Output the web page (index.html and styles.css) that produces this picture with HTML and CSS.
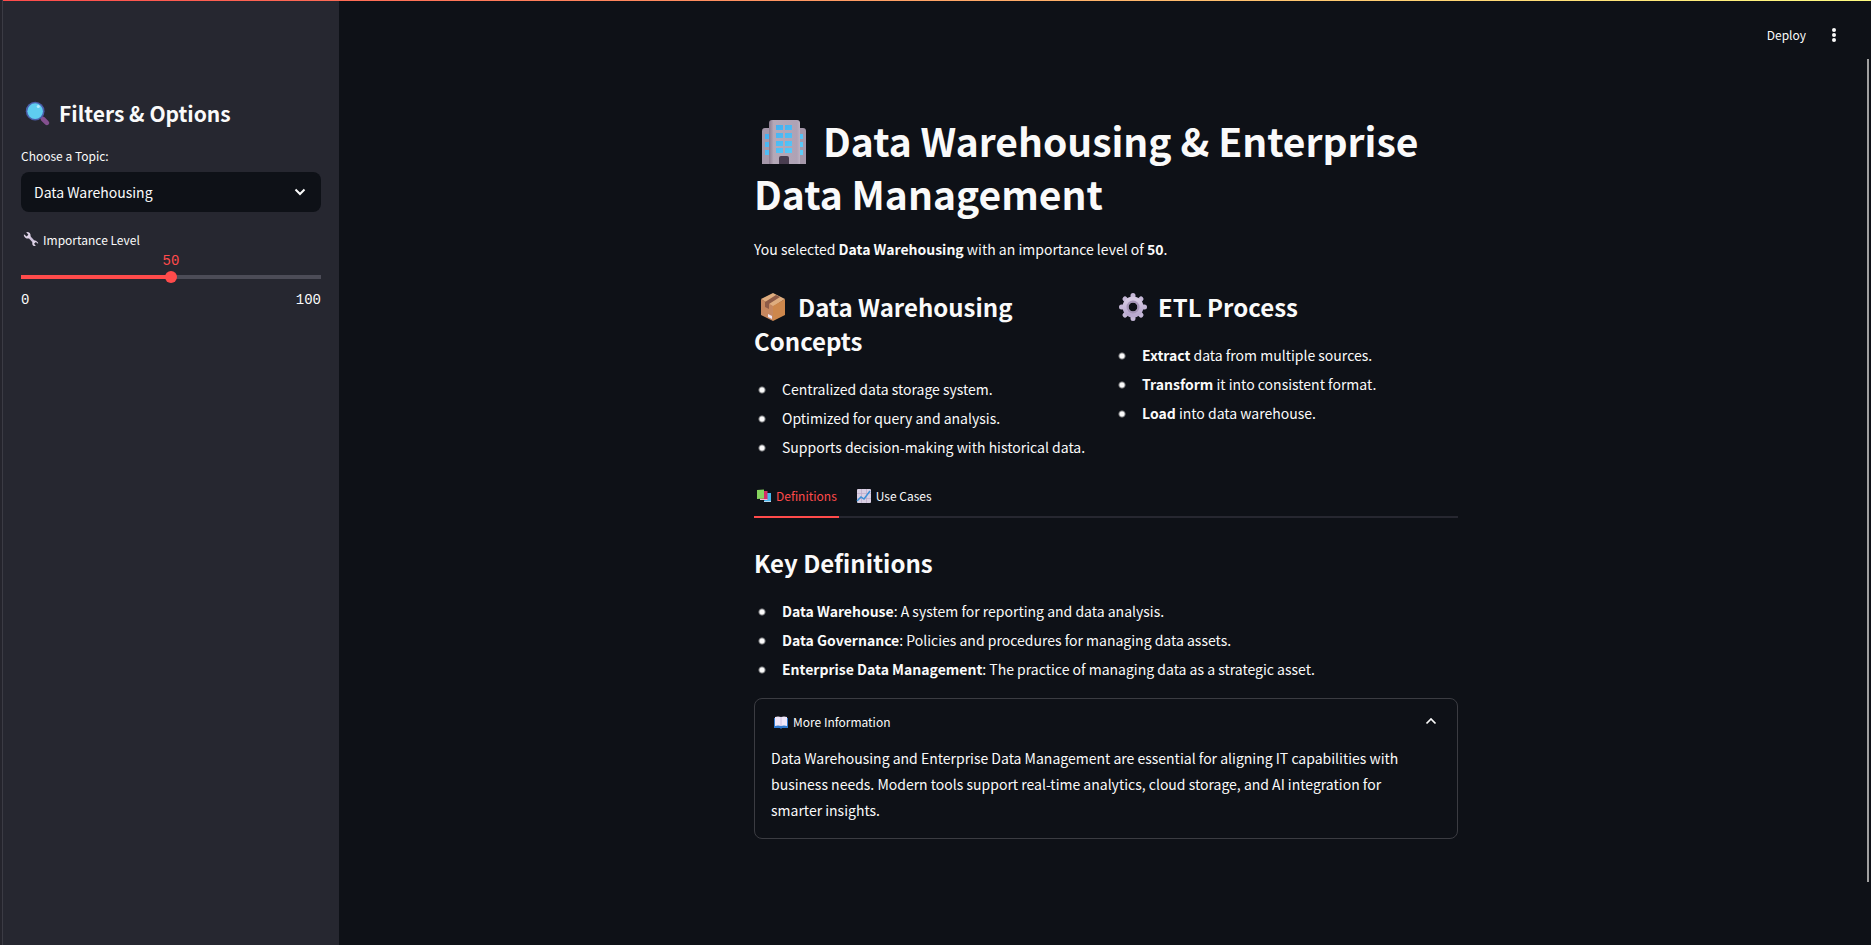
FILE: index.html
```html
<!DOCTYPE html>
<html lang="en">
<head>
<meta charset="utf-8">
<title>Data Warehousing &amp; Enterprise Data Management</title>
<link rel="stylesheet" href="styles.css">
</head>
<body>
<div class="app">
  <div class="decoration"></div>
  <aside class="sidebar">
    <h2 class="side-title"><svg class="emoji emoji-side" viewBox="0 0 32 32" aria-hidden="true"><path d="M20 20l8 8" stroke="#533566" stroke-width="4"/><path d="M23 23l5 5" stroke="#84508f" stroke-width="6" stroke-linecap="round"/><circle cx="13" cy="13" r="12" fill="#4b5eaa"/><circle cx="13" cy="13" r="10" fill="#5fcdf0"/><circle cx="17" cy="7" r="2" fill="#b5ebfb"/></svg>Filters &amp; Options</h2>
    <label class="label" for="topic">Choose a Topic:</label>
    <div class="select-wrap">
      <select class="select" id="topic"><option>Data Warehousing</option></select>
      <svg class="select-chevron" viewBox="0 0 12 8" aria-hidden="true"><path d="M1.500 1.500l4.500 4.500 4.500-4.500" fill="none" stroke="#fafafa" stroke-width="2"/></svg>
    </div>
    <label class="label" for="level"><svg class="emoji emoji-wrench" viewBox="0 0 32 32" aria-hidden="true"><path d="M10 9l13 14" stroke="#cfc3dc" stroke-width="6"/><path d="M0 5l6 5 4-4-5-6c6-1 11 3 10 9-1 6-9 8-13 3-2-2-3-5-2-7zM32 27l-5-4-4 4 4 5c-5 1-9-2-8-7 1-6 7-7 11-3 2 2 3 3 2 5z" fill="#dfd4e8"/></svg>Importance Level</label>
    <output class="value" for="level">50</output>
    <input class="slider" id="level" type="range" min="0" max="100" value="50">
    <div class="ticks"><span>0</span><span>100</span></div>
  </aside>
  <main class="main">
    <header class="toolbar">
      <button class="deploy" type="button">Deploy</button>
      <button class="menu" type="button" aria-label="Main menu"><svg viewBox="0 0 4 14" aria-hidden="true"><circle cx="2" cy="2" r="2"/><circle cx="2" cy="7" r="2"/><circle cx="2" cy="12" r="2"/></svg></button>
    </header>
    <div class="content">
      <h1 class="title"><svg class="emoji emoji-title" viewBox="0 0 44 44" aria-hidden="true"><defs><linearGradient id="wall"><stop offset="0" stop-color="#8b7b8f"/><stop offset=".15" stop-color="#b5a9b8"/><stop offset=".9" stop-color="#aea2b5"/><stop offset="1" stop-color="#bdb2c2"/></linearGradient><linearGradient id="glass" x1="0" y1="0" x2="1" y2="1"><stop offset="0" stop-color="#3eaaf0"/><stop offset="1" stop-color="#5fd0fa"/></linearGradient></defs><path d="M0 44V11q0-3 3-3h38q3 0 3 3v33z" fill="#a598aa"/><path d="M7 44V3q0-3 3-3h25q3 0 3 3v41z" fill="url(#wall)"/><path fill="url(#glass)" d="M14 5h7v5h-7zM23 5h7v5h-7zM14 13h7v5h-7zM23 13h7v5h-7zM14 21h7v5h-7zM23 21h7v5h-7zM14 28h7v5h-7zM23 28h7v5h-7zM3 14h4v5H3zM3 22h4v5H3zM3 30h4v5H3zM38 14h3v5h-3zM38 22h3v5h-3zM38 30h3v5h-3z"/><path d="M17 44v-6q0-2 2-2h6q2 0 2 2v6z" fill="#493d50"/></svg>Data Warehousing &amp; Enterprise Data Management</h1>
      <p class="text">You selected <strong>Data Warehousing</strong> with an importance level of <strong>50</strong>.</p>
      <div class="columns">
        <section class="column">
          <h3 class="heading"><svg class="emoji emoji-heading" viewBox="0 0 28 28" aria-hidden="true"><path d="M14 0l12 6-12 8L2 6z" fill="#dfad7f"/><path d="M2 6l12 7v15L2 22z" fill="#c6875f"/><path d="M26 6l-12 7v15l12-6z" fill="#cd874c"/><path d="M17 2l4 2-11 7v5l-4-2V9z" fill="#8e5b47"/><path d="M9 21l4 2v3l-4-2z" fill="#eee5f4"/></svg>Data Warehousing Concepts</h3>
          <ul class="list">
            <li>Centralized data storage system.</li>
            <li>Optimized for query and analysis.</li>
            <li>Supports decision-making with historical data.</li>
          </ul>
        </section>
        <section class="column">
          <h3 class="heading"><svg class="emoji emoji-heading" viewBox="0 0 28 28" aria-hidden="true"><defs><linearGradient id="metal" x1="0" y1="0" x2="0" y2="1"><stop offset="0" stop-color="#d6cae3"/><stop offset="1" stop-color="#b9a9cf"/></linearGradient></defs><g stroke="#c5b8d7" stroke-width="5" stroke-linecap="round"><path d="M14 2.500v4M14 21.500v4M2.500 14h4M21.500 14h4M6 6l3 3M19 19l3 3M6 22l3-3M19 9l3-3"/></g><circle cx="14" cy="14" r="7.500" fill="none" stroke="url(#metal)" stroke-width="6"/><circle cx="14" cy="14" r="5.500" fill="none" stroke="#a696b8" stroke-width="2"/></svg>ETL Process</h3>
          <ul class="list">
            <li><strong>Extract</strong> data from multiple sources.</li>
            <li><strong>Transform</strong> it into consistent format.</li>
            <li><strong>Load</strong> into data warehouse.</li>
          </ul>
        </section>
      </div>
      <div class="tabs" role="tablist">
        <button class="tab tab-active" type="button" role="tab" aria-selected="true"><svg class="emoji emoji-small" viewBox="0 0 14 14" aria-hidden="true"><path d="M8 4h6v9H7z" fill="#48b9ee"/><path d="M7 12h7v1H7z" fill="#b8d8f0"/><path d="M3 2h7.500v9H3z" fill="#d52c68"/><path d="M3 10h7.500v1H3z" fill="#eeb5d4"/><path d="M0 1l7-.5v9L0 10z" fill="#86d35e"/></svg>Definitions</button>
        <button class="tab" type="button" role="tab" aria-selected="false"><svg class="emoji emoji-small" viewBox="0 0 14 14" aria-hidden="true"><rect width="14" height="14" rx="1" fill="#d9cfe3"/><path d="M0 4.500h14M0 9.500h14M4.500 0v14M9.500 0v14" stroke="#baaac8" stroke-width=".7"/><path d="M0 12l4-4 3 2 6-8" fill="none" stroke="#3c91d7" stroke-width="1.500"/></svg>Use Cases</button>
      </div>
      <h3 class="heading">Key Definitions</h3>
      <ul class="list">
        <li><strong>Data Warehouse</strong>: A system for reporting and data analysis.</li>
        <li><strong>Data Governance</strong>: Policies and procedures for managing data assets.</li>
        <li><strong>Enterprise Data Management</strong>: The practice of managing data as a strategic asset.</li>
      </ul>
      <details class="expander" open>
        <summary class="summary"><span><svg class="emoji emoji-small" viewBox="0 0 14 14" aria-hidden="true"><path d="M0 3h14v10H8l-1 1-1-1H0z" fill="#2f79cf"/><path d="M1 2q3-1 6 0 3-1 6 0v9q-3-1-6 0-3-1-6 0z" fill="#efe7fa"/><path d="M7 2v9" stroke="#c4b7da" stroke-width=".8"/></svg>More Information</span><svg class="chevron" viewBox="0 0 12 8" aria-hidden="true"><path d="M1.500 5.500L6 1l4.500 4.500" fill="none" stroke="#fafafa" stroke-width="1.700"/></svg></summary>
        <p class="text expander-text">Data Warehousing and Enterprise Data Management are essential for aligning IT capabilities with business needs. Modern tools support real-time analytics, cloud storage, and AI integration for smarter insights.</p>
      </details>
    </div>
    <div class="scroll-thumb"></div>
  </main>
</div>
</body>
</html>
```

FILE: styles.css
```css
* { box-sizing: border-box; }

body {
  margin: 0;
  background: #0e1117;
  color: #fafafa;
  font: 14px/26px "Noto Sans CJK SC", "Noto Sans", sans-serif;
}

h1, h2, h3, p, ul { margin: 0; padding: 0; }
button, select { font: inherit; color: inherit; }
button { padding: 0; border: 0; background: none; }

.app {
  position: relative;
  display: flex;
  min-height: 100vh;
  border-left: 2px solid #24242c;
}

.decoration {
  position: absolute;
  top: 0;
  left: 1px;
  right: 0;
  height: 1px;
  background: linear-gradient(90deg, #ff4b4b, #fffd80);
}

.sidebar {
  flex: 0 0 337px;
  padding: 99px 18px 0;
  border-left: 1px solid #3b3b44;
  background: #262730;
}

.emoji { display: inline-block; overflow: visible; }

.side-title {
  margin-bottom: 18px;
  font-size: 21px;
  line-height: 29px;
  font-weight: 600;
}

.emoji-side { width: 25px; height: 25px; margin: 0 9px 0 4px; vertical-align: -4px; }

.label {
  display: block;
  font-size: 12px;
  line-height: 20px;
}

.emoji-wrench { width: 14px; height: 14px; margin: 0 5px 0 3px; vertical-align: -1px; }

.select-wrap { position: relative; margin: 6px 0 18px; }

.select {
  display: block;
  width: 100%;
  height: 40px;
  padding: 0 13px;
  border: 0;
  border-radius: 8px;
  appearance: none;
  background: #0e1117;
}

.select-chevron {
  position: absolute;
  top: 16px;
  right: 15px;
  width: 12px;
  height: 8px;
  pointer-events: none;
}

.value {
  display: block;
  padding-top: 1px;
  color: #ff4b4b;
  font: 14px/20px "Liberation Mono", monospace;
  text-align: center;
}

.slider {
  display: block;
  width: 100%;
  height: 12px;
  margin: 0 0 7px;
  border-radius: 2px;
  appearance: none;
  background: linear-gradient(90deg, #ff4b4b 50%, #4c4c57 50%) center / 100% 4px no-repeat;
}

.slider::-webkit-slider-thumb {
  width: 12px;
  height: 12px;
  border-radius: 50%;
  appearance: none;
  background: #ff4b4b;
}

.ticks {
  display: flex;
  justify-content: space-between;
  font: 14px/20px "Liberation Mono", monospace;
}

.main { position: relative; flex: 1; min-width: 0; padding-left: 2px; }

.toolbar {
  display: flex;
  justify-content: flex-end;
  align-items: center;
  gap: 26px;
  height: 70px;
  padding-right: 35px;
}

.deploy { font-size: 12px; line-height: 20px; }
.menu { display: flex; }
.menu svg { width: 4px; height: 14px; fill: #fafafa; }

.content {
  max-width: 736px;
  margin: 0 auto;
  padding: 44px 16px 16px;
}

.title {
  margin-bottom: 16px;
  font-size: 39px;
  line-height: 53px;
  font-weight: 700;
}

.emoji-title { width: 44px; height: 44px; margin: 0 17px 0 8px; vertical-align: -7px; }

strong { font-weight: 600; }

.columns {
  display: grid;
  grid-template-columns: 1fr 1fr;
  gap: 16px;
  margin: 28px 0 16px;
}

.heading {
  margin-bottom: 18px;
  font-size: 24px;
  line-height: 34px;
  font-weight: 600;
}

.emoji-heading { width: 28px; height: 28px; margin: 0 11px 0 5px; vertical-align: -4px; }

.list {
  display: grid;
  gap: 3px;
  list-style: none;
}

.list li {
  padding-left: 28px;
  background: radial-gradient(circle at 8px 14px, #fafafa 2px, transparent 4px);
}

.tabs {
  display: flex;
  gap: 16px;
  margin-bottom: 28px;
  border-bottom: 2px solid #262730;
}

.tab {
  height: 42px;
  margin-bottom: -2px;
  padding: 0 2px;
  border-bottom: 2px solid transparent;
  font-size: 12px;
  line-height: 20px;
}

.tab-active { padding-left: 3px; color: #ff4b4b; border-color: #ff4b4b; }

.emoji-small { width: 14px; height: 14px; margin-right: 5px; vertical-align: -2px; }

.expander {
  margin-top: 16px;
  padding: 13px 16px 15px;
  border: 1px solid #3b3c42;
  border-radius: 8px;
}

.summary {
  display: flex;
  justify-content: space-between;
  align-items: center;
  margin-bottom: 13px;
  padding: 0 4px 0 3px;
  font-size: 12px;
  line-height: 20px;
  list-style: none;
}

.expander-text { padding-right: 16px; }

.chevron { width: 12px; height: 8px; }

.scroll-thumb {
  position: absolute;
  top: 59px;
  right: 2px;
  bottom: 63px;
  width: 2px;
  background: #a0a0a0;
}
```
